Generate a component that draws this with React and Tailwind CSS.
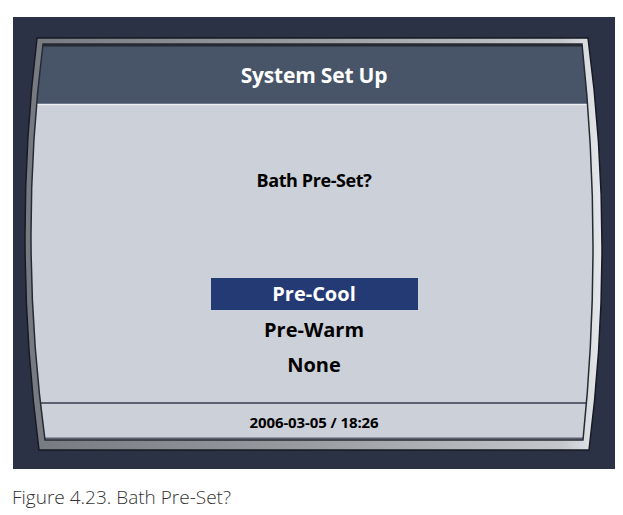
import React from 'react';

// CRT bezel geometry, in frame coordinates (frame is 602 x 452)
const outerPath = 'M24 21 L575 21 Q602.5 226 576 433 L26 433 Q-1 226 24 21 Z';
const screenPath = 'M30 27 L569 27 Q590.5 225 570 423 L32 423 Q5 225 30 27 Z';

const options = [
    { label: 'Pre-Cool', selected: true },
    { label: 'Pre-Warm' },
    { label: 'None' },
];

const Bezel = () => (
    <svg className="absolute inset-0" width="602" height="452" viewBox="0 0 602 452">
        <defs>
            <linearGradient id="rim" x1="0" y1="0" x2="1" y2="0">
                <stop offset="0" stopColor="#767a80" />
                <stop offset="0.5" stopColor="#9a9ea3" />
                <stop offset="0.93" stopColor="#c4c8cc" />
                <stop offset="1" stopColor="#e6e8eb" />
            </linearGradient>
            <clipPath id="glass">
                <path d={screenPath} />
            </clipPath>
        </defs>
        <path d={outerPath} fill="url(#rim)" stroke="#161a22" strokeWidth="1.5" />
        <g clipPath="url(#glass)">
            <rect x="0" y="0" width="602" height="88" fill="#485468" />
            <rect x="0" y="88" width="602" height="340" fill="#ccd0d8" />
            <line x1="0" y1="87.5" x2="602" y2="87.5" stroke="#eef0f3" strokeWidth="1.5" />
            <line x1="0" y1="386" x2="602" y2="386" stroke="#5b6170" strokeWidth="2" />
            <line x1="0" y1="421.5" x2="602" y2="421.5" stroke="#5b6170" strokeWidth="2" />
            <line x1="0" y1="28" x2="602" y2="28" stroke="#262a33" strokeWidth="3" />
        </g>
        <path d={screenPath} fill="none" stroke="#262a33" strokeWidth="1.5" />
    </svg>
);

export default function App() {
    return (
        <div className="w-[623px] h-[515px] bg-white pt-[17px] font-['Open_Sans',sans-serif]">
            {/* monitor frame */}
            <div className="relative ml-[13px] w-[602px] h-[452px] bg-[#2c3246]">
                <Bezel />
                <div className="relative flex flex-col items-center pt-[28px]">
                    <div className="h-[60px] flex items-center justify-center text-[21px] tracking-[-0.2px] font-bold text-white leading-none">
                        System Set Up
                    </div>

                    <div className="mt-[65px] h-[20px] flex items-center text-[18px] tracking-[-0.4px] font-bold text-black">
                        Bath Pre-Set?
                    </div>

                    <div className="mt-[88px] flex flex-col items-center">
                        {options.map((o) => (
                            <div
                                key={o.label}
                                className={
                                    o.selected
                                        ? 'w-[207px] h-[32px] flex items-center justify-center bg-[#233a74] text-white text-[20px] font-bold'
                                        : 'h-[30px] mt-[5px] flex items-center justify-center text-black text-[20px] font-bold'
                                }
                            >
                                {o.label}
                            </div>
                        ))}
                    </div>

                    <div className="mt-[32px] h-[20px] flex items-center text-[15px] tracking-[-0.1px] font-bold text-black">
                        2006-03-05 / 18:26
                    </div>
                </div>
            </div>

            <p className="mt-[16px] pl-[12px] text-[19px] leading-[24px] font-light text-[#333]">
                Figure 4.23. Bath Pre-Set?
            </p>
        </div>
    );
}
